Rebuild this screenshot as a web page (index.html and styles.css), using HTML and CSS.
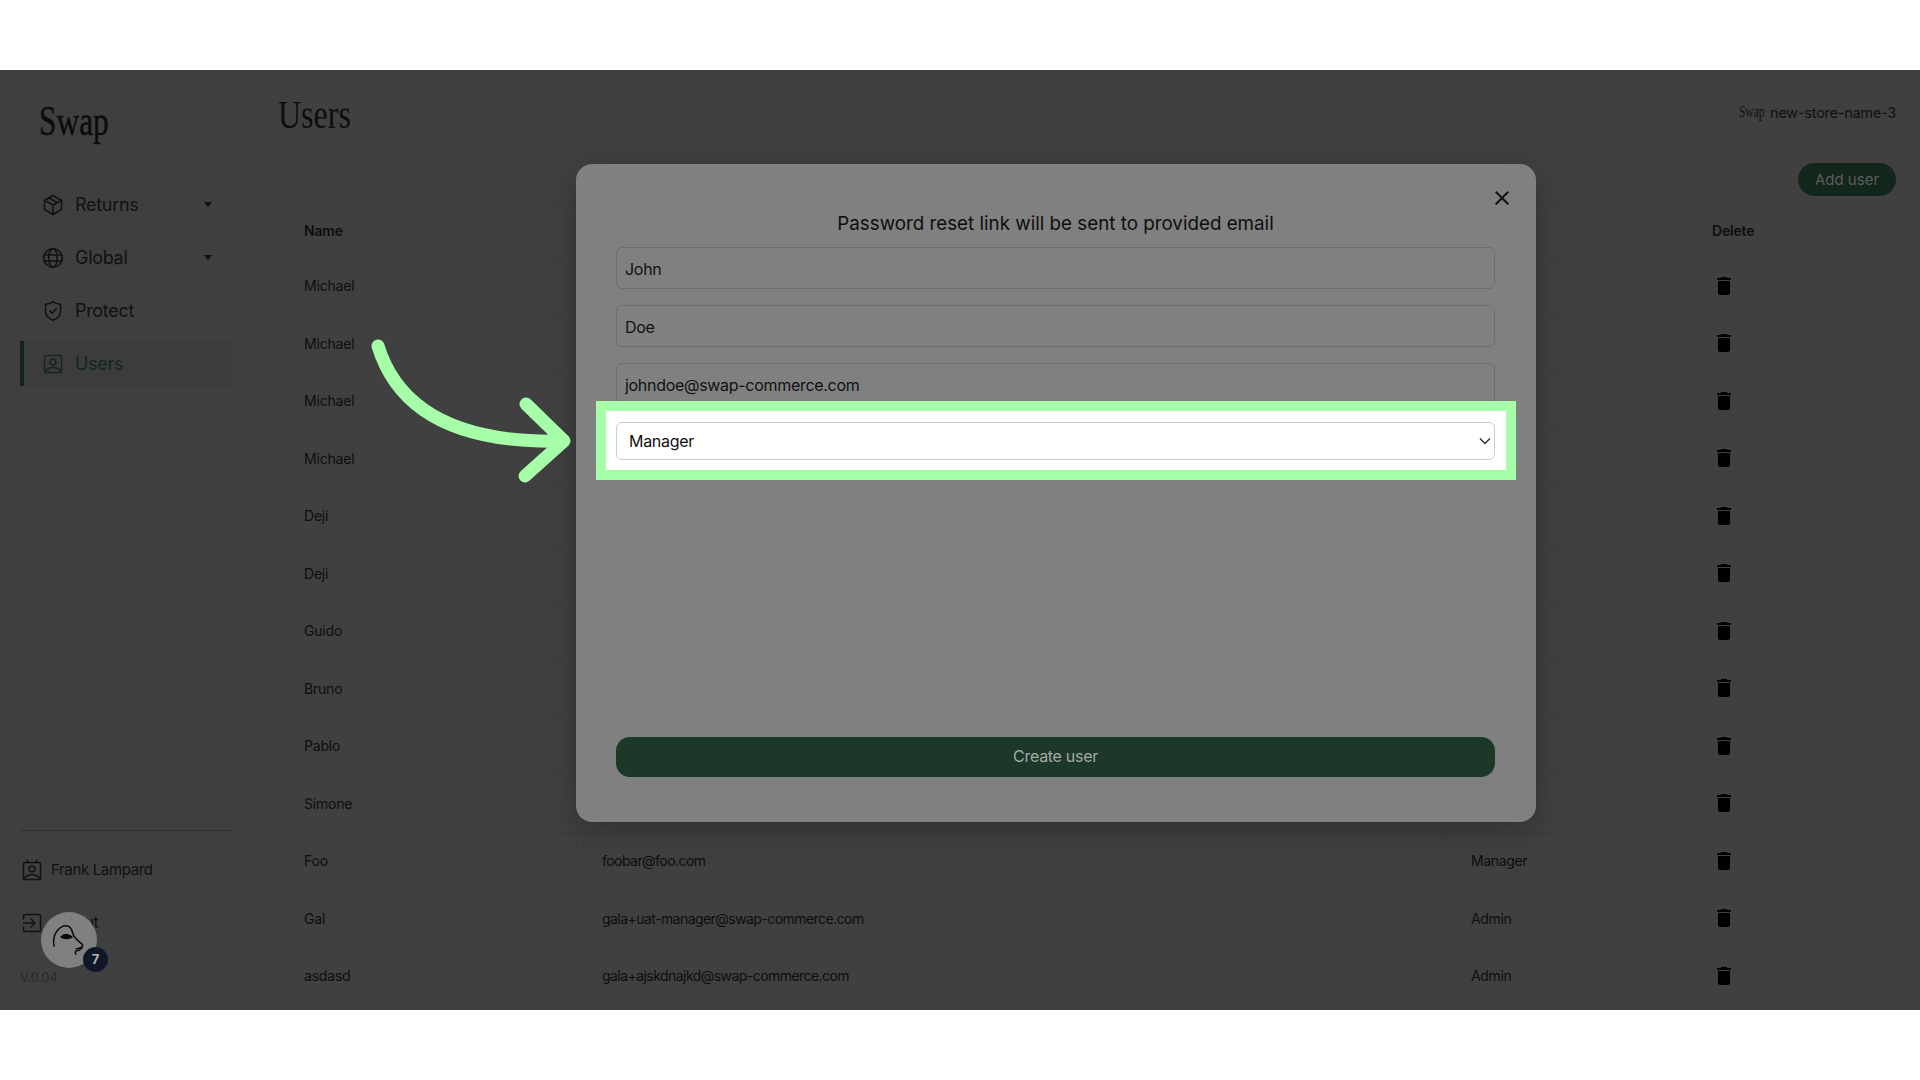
FILE: index.html
```html
<!DOCTYPE html>
<html lang="en">
  <head>
    <meta charset="utf-8" />
    <title>Users</title>
    <link rel="stylesheet" href="styles.css">
  </head>
  <body>
    <svg class="sprite"><symbol id="trash" viewBox="0 0 24 24"><path d="M6 19c0 1.100.9 2 2 2h8c1.100 0 2-.9 2-2V7H6v12zM19 4h-3.500l-1-1h-5l-1 1H5v2h14V4z"/></symbol></svg>
    <div class="frame">
      <aside class="sidebar">
        <div class="logo"><span>Swap</span></div>
        <nav class="nav">
          <a class="nav-item">
            <svg class="icon" viewBox="0 0 24 24"><path d="M12 2.500l8.500 4.800v9.400L12 21.500l-8.500-4.800V7.300z"/><path d="M3.500 7.300L12 12l8.500-4.700M12 12v9.500M7.800 4.900l8.500 4.800"/></svg>
            <span class="nav-label">Returns</span>
            <i class="caret"></i>
          </a>
          <a class="nav-item">
            <svg class="icon" viewBox="0 0 24 24"><circle cx="12" cy="12" r="9.300"/><ellipse cx="12" cy="12" rx="4.200" ry="9.300"/><path d="M3.200 9h17.600M3.200 15h17.600"/></svg>
            <span class="nav-label">Global</span>
            <i class="caret"></i>
          </a>
          <a class="nav-item">
            <svg class="icon" viewBox="0 0 24 24"><path d="M12 2.800c2.500 1.600 4.800 2.300 7.500 2.400v7.300c0 4-3 6.900-7.500 8.700-4.500-1.800-7.500-4.700-7.500-8.700V5.200c2.700-.1 5-.8 7.500-2.400z"/><path d="M8.800 11.800l2.300 2.300 4.200-4.200"/></svg>
            <span class="nav-label">Protect</span>
          </a>
          <a class="nav-item active">
            <svg class="icon" viewBox="0 0 24 24"><rect x="3.500" y="3.500" width="17" height="17" rx="1.500"/><circle cx="12" cy="10" r="3"/><path d="M4 20c1.500-3.200 4.500-4.600 8-4.600s6.500 1.400 8 4.600"/></svg>
            <span class="nav-label">Users</span>
          </a>
        </nav>
        <div class="side-foot">
          <a class="foot-item">
            <svg class="icon" viewBox="0 0 24 24"><rect x="3.500" y="4.500" width="17" height="17" rx="1.500"/><path d="M7.500 2v3M16.500 2v3"/><circle cx="12" cy="11" r="3"/><path d="M4 21c1.500-3 4.500-4.300 8-4.300s6.500 1.300 8 4.300"/></svg>
            <span>Frank Lampard</span>
          </a>
          <a class="foot-item">
            <svg class="icon" viewBox="0 0 24 24"><path d="M3.500 8V5A1.500 1.500 0 0 1 5 3.500h14A1.500 1.500 0 0 1 20.500 5v14a1.500 1.500 0 0 1-1.500 1.500H5A1.500 1.500 0 0 1 3.500 19v-3"/><path d="M3.500 12H15M11 8l4 4-4 4"/></svg>
            <span>Logout</span>
          </a>
          <div class="version">V.0.04</div>
        </div>
      </aside>

      <main class="main">
        <header class="topbar">
          <h1 class="title">Users</h1>
          <div class="store">
            <span class="store-logo">Swap</span>
            <span>new-store-name-3</span>
          </div>
        </header>
        <div class="toolbar"><button class="add-btn" type="button">Add user</button></div>
        <table class="users-table">
          <colgroup><col class="col-name"><col class="col-email"><col class="col-role"><col></colgroup>
          <thead>
            <tr><th>Name</th><th>Email</th><th>Role</th><th>Delete</th></tr>
          </thead>
          <tbody>
            <tr><td>Michael</td><td></td><td></td><td><svg class="trash"><use href="#trash"/></svg></td></tr>
            <tr><td>Michael</td><td></td><td></td><td><svg class="trash"><use href="#trash"/></svg></td></tr>
            <tr><td>Michael</td><td></td><td></td><td><svg class="trash"><use href="#trash"/></svg></td></tr>
            <tr><td>Michael</td><td></td><td></td><td><svg class="trash"><use href="#trash"/></svg></td></tr>
            <tr><td>Deji</td><td></td><td></td><td><svg class="trash"><use href="#trash"/></svg></td></tr>
            <tr><td>Deji</td><td></td><td></td><td><svg class="trash"><use href="#trash"/></svg></td></tr>
            <tr><td>Guido</td><td></td><td></td><td><svg class="trash"><use href="#trash"/></svg></td></tr>
            <tr><td>Bruno</td><td></td><td></td><td><svg class="trash"><use href="#trash"/></svg></td></tr>
            <tr><td>Pablo</td><td></td><td></td><td><svg class="trash"><use href="#trash"/></svg></td></tr>
            <tr><td>Simone</td><td></td><td></td><td><svg class="trash"><use href="#trash"/></svg></td></tr>
            <tr><td>Foo</td><td class="email">foobar@foo.com</td><td class="role">Manager</td><td><svg class="trash"><use href="#trash"/></svg></td></tr>
            <tr><td>Gal</td><td class="email">gala+uat-manager@swap-commerce.com</td><td class="role">Admin</td><td><svg class="trash"><use href="#trash"/></svg></td></tr>
            <tr><td>asdasd</td><td class="email">gala+ajskdnajkd@swap-commerce.com</td><td class="role">Admin</td><td><svg class="trash"><use href="#trash"/></svg></td></tr>
          </tbody>
        </table>
      </main>

      <div class="chat-bubble">
        <svg class="face" viewBox="0 0 56 56"><path d="M13 34c-1-6 0-11 3-15 3-4 7-6 11-5 3 1 4 4 5 8 1 4 4 6 9 10 1 1 1 2 0 3-2 1-4 2-6 2"/><path d="M41 36c-2 2-4 3-6 3-1 1-1 2 0 3"/><path class="eye" d="M20 25c3-3 7-3 11 0-4 2-8 2-11 0z"/></svg>
        <span class="badge">7</span>
      </div>

      <section class="modal">
        <svg class="close" viewBox="0 0 24 24"><path d="M19 6.410 17.590 5 12 10.590 6.410 5 5 6.410 10.590 12 5 17.590 6.410 19 12 13.410 17.590 19 19 17.590 13.410 12z"/></svg>
        <h2 class="modal-title">Password reset link will be sent to provided email</h2>
        <input class="field" value="John">
        <input class="field" value="Doe">
        <input class="field" value="johndoe@swap-commerce.com">
        <button class="create-btn" type="button">Create user</button>
      </section>

      <div class="highlight">
        <select class="role-select"><option>Manager</option></select>
        <svg class="chevron" viewBox="0 0 12 8"><path d="M1 1.500l5 5 5-5"/></svg>
      </div>

      <svg class="pointer" viewBox="0 0 210 155"><path d="M10 10C30 75 90 108 196 105M158 68l38 37-39 35"/></svg>
    </div>
  </body>
</html>
```

FILE: styles.css
```css
* {
  box-sizing: border-box;
}

body {
  margin: 0;
  padding: 70px 0;
  background-color: #fff;
  font-family: "Inter", "Liberation Sans", sans-serif;
  color: #0e0e0e;
}

.sprite {
  display: none;
}

.frame {
  position: relative;
  display: flex;
  height: 940px;
  overflow: hidden;
  background-color: #404040;
}

/* sidebar */
.sidebar {
  display: flex;
  flex-direction: column;
  width: 254px;
  flex-shrink: 0;
  padding-left: 20px;
  padding-right: 20px;
  background-color: #3f3f3f;
  border-right: 1px solid #3b3b3b;
}

.logo {
  height: 104px;
  padding: 25px 0 0 19px;
  font-family: "Liberation Serif", serif;
  font-size: 43px;
  line-height: 52px;
  color: #0c0c0c;
  -webkit-text-stroke: 0.5px #0c0c0c;
}

.logo span {
  display: inline-block;
  transform: scaleX(0.73);
  transform-origin: left;
}

.nav {
  display: flex;
  flex-direction: column;
  gap: 8px;
  margin-top: 8px;
}

.nav-item {
  display: flex;
  align-items: center;
  gap: 10px;
  height: 45px;
  padding-left: 17px;
  padding-right: 21px;
  border-left: 4px solid transparent;
  font-size: 18px;
  letter-spacing: -0.3px;
  color: #111;
}

.nav-label {
  flex: 1;
}

.nav-item.active {
  background-color: #3c3c3c;
  border-left-color: #12251b;
  color: #14271d;
}

.icon {
  width: 24px;
  height: 24px;
  flex-shrink: 0;
  fill: none;
  stroke: currentColor;
  stroke-width: 1.5;
  stroke-linejoin: round;
  stroke-linecap: round;
}

.caret {
  width: 0;
  height: 0;
  border-left: 4.5px solid transparent;
  border-right: 4.5px solid transparent;
  border-top: 5px solid #111;
}

.side-foot {
  margin-top: auto;
  border-top: 1px solid #303030;
  padding-top: 16px;
  height: 180px;
}

.foot-item {
  display: flex;
  align-items: center;
  gap: 7px;
  height: 45px;
  margin-bottom: 8px;
  font-size: 15px;
  letter-spacing: -0.35px;
  color: #111;
}

.version {
  margin-top: 25px;
  font-size: 12.5px;
  color: #2a2a2a;
}

/* main area */
.main {
  flex: 1;
  padding: 0 24px;
  min-width: 0;
}

.topbar {
  display: flex;
  justify-content: space-between;
  height: 85px;
  border-bottom: 1px solid #3c3c3c;
}

.title {
  margin: 20px 0 0;
  font-family: "Liberation Serif", serif;
  font-size: 39px;
  line-height: 50px;
  font-weight: 400;
  transform: scaleX(0.82);
  transform-origin: left;
}

.store {
  display: flex;
  align-items: center;
  gap: 6px;
  height: 44px;
  margin-top: 20px;
  font-size: 14.5px;
  letter-spacing: -0.25px;
  color: #111;
}

.store-logo {
  font-family: "Liberation Serif", serif;
  font-size: 16px;
  letter-spacing: 0;
  transform: scaleX(0.72);
  transform-origin: right;
}

.toolbar {
  display: flex;
  justify-content: flex-end;
  padding: 8px 0;
}

.add-btn {
  width: 98px;
  height: 33px;
  padding: 0;
  border: 0;
  border-radius: 17px;
  background-color: #13261c;
  font-family: inherit;
  font-size: 15px;
  color: #5c5c5c;
}

.users-table {
  width: 100%;
  table-layout: fixed;
  border-collapse: collapse;
  font-size: 14px;
  letter-spacing: -0.2px;
}

.col-name {
  width: 298px;
}

.col-email {
  width: 869px;
}

.col-role {
  width: 241px;
}

.users-table th,
.users-table td {
  padding: 0 0 1px 25px;
  border: 1px solid #3c3c3c;
  text-align: left;
}

.users-table th {
  height: 53px;
  font-weight: 600;
}

.users-table td {
  height: 57.5px;
}

.users-table .email {
  letter-spacing: -0.55px;
}

.users-table .role {
  letter-spacing: -0.35px;
}

.trash {
  display: block;
  width: 24px;
  height: 24px;
  fill: #000;
}

/* floating help button */
.chat-bubble {
  position: absolute;
  left: 41px;
  top: 842px;
  width: 56px;
  height: 56px;
  border-radius: 50%;
  background-color: #808080;
}

.face {
  display: block;
  fill: none;
  stroke: #0a0a0a;
  stroke-width: 1.5;
  stroke-linecap: round;
  stroke-linejoin: round;
}

.eye {
  fill: #0a0a0a;
}

.badge {
  position: absolute;
  left: 42px;
  top: 35px;
  width: 25px;
  height: 25px;
  border-radius: 50%;
  background-color: #0f1729;
  color: #b5b5b5;
  font-size: 13px;
  font-weight: 700;
  line-height: 25px;
  text-align: center;
}

/* modal */
.modal {
  position: absolute;
  left: 576px;
  top: 94px;
  display: flex;
  flex-direction: column;
  width: 960px;
  height: 658px;
  padding: 0 41px 45px 40px;
  border-radius: 16px;
  background-color: #808080;
  box-shadow: 0 8px 32px rgba(0, 0, 0, 0.25);
}

.close {
  position: absolute;
  right: 22px;
  top: 22px;
  width: 24px;
  height: 24px;
  fill: #111;
}

.modal-title {
  margin: 0;
  height: 83px;
  padding-top: 48px;
  font-size: 18.8px;
  line-height: 24px;
  font-weight: 400;
  text-align: center;
  color: #0e0e0e;
}

.field {
  display: block;
  flex-shrink: 0;
  width: 100%;
  height: 42px;
  margin-bottom: 16px;
  padding: 2px 8px 0;
  border: 1px solid #6e6e6e;
  border-radius: 6px;
  background: transparent;
  font-family: inherit;
  font-size: 16px;
  letter-spacing: -0.3px;
  color: #111;
}

.create-btn {
  margin-top: auto;
  height: 40px;
  padding-bottom: 4px;
  border: 0;
  border-radius: 14px;
  background-color: #1b3829;
  font-family: inherit;
  font-size: 16px;
  letter-spacing: -0.3px;
  color: #a4aaa6;
}

/* tutorial highlight */
.highlight {
  position: absolute;
  left: 596px;
  top: 331px;
  width: 920px;
  height: 79px;
  padding: 11px 11px 10px 10px;
  border: 10px solid #a6ffa8;
  background-color: #fff;
}

.role-select {
  display: block;
  width: 100%;
  height: 38px;
  padding: 0 12px;
  border: 1px solid #ccc;
  border-radius: 6px;
  background-color: #fff;
  appearance: none;
  font-family: inherit;
  font-size: 16px;
  letter-spacing: -0.3px;
  color: #111;
}

.chevron {
  position: absolute;
  right: 15px;
  top: 26px;
  width: 12px;
  height: 8px;
  fill: none;
  stroke: #333;
  stroke-width: 1.5;
}

.pointer {
  position: absolute;
  left: 368px;
  top: 266px;
  width: 210px;
  height: 155px;
  fill: none;
  stroke: #a6ffa8;
  stroke-width: 13;
  stroke-linecap: round;
  stroke-linejoin: round;
}
```
